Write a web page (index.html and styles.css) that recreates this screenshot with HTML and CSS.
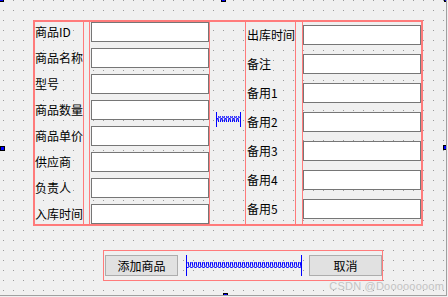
FILE: index.html
```html
<!DOCTYPE html>
<html lang="zh-CN">

<head>
    <meta charset="UTF-8">
    <title>添加商品</title>
    <link rel="stylesheet" href="styles.css">
</head>

<body>
    <div class="canvas">
        <div class="main-box">
            <div class="label-col left-labels">
                <div class="row">商品ID</div>
                <div class="row">商品名称</div>
                <div class="row">型号</div>
                <div class="row">商品数量</div>
                <div class="row">商品单价</div>
                <div class="row">供应商</div>
                <div class="row">负责人</div>
                <div class="row">入库时间</div>
            </div>
            <div class="edit-col left-edits">
                <div class="line-edit"></div>
                <div class="line-edit"></div>
                <div class="line-edit"></div>
                <div class="line-edit"></div>
                <div class="line-edit"></div>
                <div class="line-edit"></div>
                <div class="line-edit"></div>
                <div class="line-edit"></div>
            </div>
            <div class="mid-spacer">
                <svg class="spring small" width="25" height="15" viewBox="0 0 25 15">
                    <defs>
                        <pattern id="zz1" width="4" height="6" patternUnits="userSpaceOnUse">
                            <path d="M0 6 L1 0 L2 0 L3 6 L4 6" fill="none" stroke="#0000ff" stroke-width="1.1"/>
                        </pattern>
                    </defs>
                    <line x1="0.5" y1="0" x2="0.5" y2="15" stroke="#0000ff"/>
                    <line x1="24.5" y1="0" x2="24.5" y2="15" stroke="#0000ff"/>
                    <rect x="1" y="4" width="23" height="6" fill="url(#zz1)"/>
                </svg>
            </div>
            <div class="label-col right-labels">
                <div class="row">出库时间</div>
                <div class="row">备注</div>
                <div class="row">备用1</div>
                <div class="row">备用2</div>
                <div class="row">备用3</div>
                <div class="row">备用4</div>
                <div class="row">备用5</div>
            </div>
            <div class="edit-col right-edits">
                <div class="line-edit"></div>
                <div class="line-edit"></div>
                <div class="line-edit"></div>
                <div class="line-edit"></div>
                <div class="line-edit"></div>
                <div class="line-edit"></div>
                <div class="line-edit"></div>
            </div>
        </div>

        <div class="button-box">
            <div class="push-button">添加商品</div>
            <svg class="spring wide" width="116" height="21" viewBox="0 0 116 21">
                <defs>
                    <pattern id="zz2" width="4" height="6" patternUnits="userSpaceOnUse">
                        <path d="M0 6 L1 0 L2 0 L3 6 L4 6" fill="none" stroke="#0000ff" stroke-width="1.1"/>
                    </pattern>
                </defs>
                <line x1="0.5" y1="0" x2="0.5" y2="21" stroke="#0000ff"/>
                <line x1="115.5" y1="0" x2="115.5" y2="21" stroke="#0000ff"/>
                <rect x="1" y="7" width="114" height="6" fill="url(#zz2)"/>
            </svg>
            <div class="push-button">取消</div>
        </div>

        <span class="handle h-tl"></span>
        <span class="handle h-t"></span>
        <span class="handle h-tr"></span>
        <span class="handle h-l"></span>
        <span class="handle h-r"></span>
        <span class="handle h-b"></span>
        <span class="watermark">CSDN @Doooooooom</span>
    </div>
</body>

</html>
```

FILE: styles.css
```css
body {
    margin: 0;
    padding: 0;
    background: #f0f0f0;
    font-family: "Noto Sans CJK SC", "DejaVu Sans", sans-serif;
    font-size: 12px;
    color: #000;
}

.canvas {
    position: relative;
    width: 447px;
    height: 296px;
    padding: 20px 0 0 33px;
    box-sizing: border-box;
    border-right: 1px solid #a0a0a0;
    border-bottom: 1px solid #a0a0a0;
    overflow: hidden;
    background-image:
        linear-gradient(to bottom, transparent 1px, #f0f0f0 1px),
        linear-gradient(to right, #9a9a9a 1px, #f0f0f0 1px);
    background-size: 10px 10px, 10px 10px;
    background-position: 3px 0, 3px 0;
}

.main-box {
    display: flex;
    width: 390px;
    height: 206px;
    box-sizing: border-box;
    border: 2px solid #ff7b7b;
}

.label-col,
.edit-col {
    display: flex;
    flex-direction: column;
}

.left-labels,
.left-edits {
    gap: 6px;
}

.right-labels,
.right-edits {
    gap: 9px;
    padding-top: 3px;
}

.left-labels {
    width: 48px;
    border-right: 1px solid #ff7b7b;
}

.left-edits {
    width: 119px;
    margin-left: 5px;
    padding-left: 1px;
    border-left: 1px solid #ff7b7b;
    border-right: 1px solid #ff7b7b;
    box-sizing: content-box;
}

.mid-spacer {
    width: 36px;
    display: flex;
    align-items: center;
}

.spring.small {
    margin-left: 6px;
    margin-bottom: 8px;
}

.right-labels {
    width: 48px;
    border-left: 1px solid #ff7b7b;
    border-right: 1px solid #ff7b7b;
    padding-left: 1px;
    box-sizing: content-box;
}

.right-edits {
    width: 118px;
    margin-left: 6px;
    border-left: 1px solid #ff7b7b;
    box-sizing: content-box;
}

.row {
    height: 20px;
    display: flex;
    align-items: center;
    white-space: nowrap;
    line-height: 1;
}

.line-edit {
    width: 118px;
    height: 20px;
    box-sizing: border-box;
    background: #fff;
    border: 1px solid #767676;
    flex-shrink: 0;
}

.button-box {
    display: flex;
    align-items: center;
    width: 280px;
    height: 31px;
    box-sizing: border-box;
    margin: 24px 0 0 70px;
    padding: 0 0 0 1px;
    border: 1px solid #ff7b7b;
}

.push-button {
    width: 73px;
    height: 21px;
    box-sizing: border-box;
    background: #e1e1e1;
    border: 1px solid #adadad;
    display: flex;
    justify-content: center;
    align-items: center;
    line-height: 1;
}

.spring.wide {
    margin: 0 7px 0 8px;
}

.spring {
    display: block;
    flex-shrink: 0;
}

.handle {
    position: absolute;
    width: 5px;
    height: 5px;
    box-sizing: border-box;
    background: #0000ff;
    border: 1px solid #000;
}

.h-tl { left: -1px; top: -3px; }
.h-t { left: 221px; top: -3px; }
.h-tr { left: 444px; top: -3px; }
.h-l { left: 0; top: 146px; }
.h-r { left: 443px; top: 145px; }
.h-b { left: 223px; top: 293px; }

.watermark {
    position: absolute;
    right: 2px;
    bottom: 3px;
    font-family: "Liberation Sans", Arial, sans-serif;
    font-size: 11px;
    color: #c4c4c4;
    letter-spacing: 0.2px;
}
```
